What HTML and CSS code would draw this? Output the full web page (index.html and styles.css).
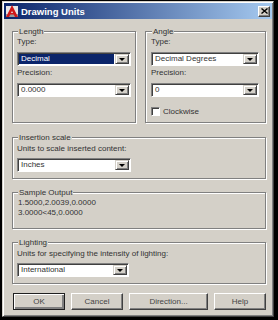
FILE: index.html
```html
<!DOCTYPE html>
<html lang="en">
<head>
    <meta charset="UTF-8">
    <meta name="viewport" content="width=device-width, initial-scale=1.0">
    <title>Drawing Units</title>
    <link rel="stylesheet" href="styles.css">
</head>
<body>
    <div class="window">
        <div class="titlebar">
            <svg class="app-icon" width="14" height="14" viewBox="0 0 14 14">
                <rect x="1" y="2" width="12" height="11" fill="#e6e6e6"/>
                <rect x="1" y="10" width="12" height="3" fill="#9a9a9a"/>
                <polygon points="7,1 13,13 10,13 7,7 4,13 1,13" fill="#d01818"/>
                <rect x="4" y="9" width="6" height="1.5" fill="#d01818"/>
            </svg>
            <span class="title">Drawing Units</span>
            <span class="close-btn">
                <svg width="7" height="6" viewBox="0 0 7 6">
                    <path d="M0.5 0.5 L6.5 5.5 M6.5 0.5 L0.5 5.5" stroke="#000" stroke-width="1.4"/>
                </svg>
            </span>
        </div>

        <div class="content">
            <div class="row-top">
                <fieldset class="group">
                    <legend>Length</legend>
                    <div class="label">Type:</div>
                    <div class="combo">
                        <span class="combo-value selected">Decimal</span>
                        <span class="combo-btn"></span>
                    </div>
                    <div class="label label-next">Precision:</div>
                    <div class="combo">
                        <span class="combo-value">0.0000</span>
                        <span class="combo-btn"></span>
                    </div>
                </fieldset>

                <fieldset class="group group-angle">
                    <legend>Angle</legend>
                    <div class="label">Type:</div>
                    <div class="combo">
                        <span class="combo-value">Decimal Degrees</span>
                        <span class="combo-btn"></span>
                    </div>
                    <div class="label label-next">Precision:</div>
                    <div class="combo">
                        <span class="combo-value">0</span>
                        <span class="combo-btn"></span>
                    </div>
                    <div class="check-row">
                        <span class="check"></span>
                        <span>Clockwise</span>
                    </div>
                </fieldset>
            </div>

            <fieldset class="group group-wide">
                <legend>Insertion scale</legend>
                <div class="label">Units to scale inserted content:</div>
                <div class="combo combo-short">
                    <span class="combo-value">Inches</span>
                    <span class="combo-btn"></span>
                </div>
            </fieldset>

            <fieldset class="group group-sample">
                <legend>Sample Output</legend>
                <div class="sample-line">1.5000,2.0039,0.0000</div>
                <div class="sample-line">3.0000&lt;45,0.0000</div>
            </fieldset>

            <fieldset class="group group-wide">
                <legend>Lighting</legend>
                <div class="label">Units for specifying the intensity of lighting:</div>
                <div class="combo combo-light">
                    <span class="combo-value">International</span>
                    <span class="combo-btn"></span>
                </div>
            </fieldset>

            <div class="buttons">
                <button class="btn btn-default">OK</button>
                <button class="btn">Cancel</button>
                <button class="btn btn-wide">Direction...</button>
                <button class="btn">Help</button>
            </div>
        </div>
    </div>
</body>
</html>
```

FILE: styles.css
```css
body {
    margin: 0;
    background-color: #000;
    font-family: "Liberation Sans", Arial, sans-serif;
    font-size: 8px;
    color: #333;
}

/* Dialog frame */
.window {
    margin: 1px 0 0 2px;
    width: 272px;
    height: 316px;
    box-sizing: border-box;
    padding: 1px;
    background-color: #d4d0c8;
    border: 1px solid;
    border-color: #d4d0c8 #404040 #404040 #d4d0c8;
    box-shadow: inset 1px 1px #fff, inset -1px -1px #808080;
}

.titlebar {
    height: 16px;
    display: flex;
    align-items: center;
    background: linear-gradient(90deg, #0a246a, #a6caf0);
}

.app-icon {
    margin-left: 1px;
    flex: none;
}

.title {
    flex: 1;
    margin-left: 2px;
    color: #fff;
    font-weight: bold;
    font-size: 9.5px;
}

.close-btn {
    width: 12px;
    height: 11px;
    margin-right: 2px;
    box-sizing: border-box;
    display: flex;
    align-items: center;
    justify-content: center;
    background-color: #d4d0c8;
    border: 1px solid;
    border-color: #fff #404040 #404040 #fff;
    box-shadow: inset -1px -1px #808080;
}

/* Content */
.content {
    padding: 8px 6px 0 8px;
}

.row-top {
    display: grid;
    grid-template-columns: 124px 121px;
    column-gap: 9px;
}

.group {
    margin: 0;
    min-width: 0;
    padding: 1px 4px 6px 4px;
    border: 1px solid #808080;
    box-shadow: inset 1px 1px #fff, 1px 1px #fff;
}

.group legend {
    margin-left: 1px;
    padding: 0 1px;
    line-height: 9px;
    background-color: #d4d0c8;
}

.group-angle {
    padding-left: 5px;
    padding-right: 6px;
}

.group-wide {
    margin-top: 10px;
    padding-top: 2px;
}

.group-wide + .group-sample {
    margin-top: 9px;
}

.group-sample {
    padding-bottom: 10px;
}

.group-sample + .group-wide {
    margin-top: 9px;
}

.label {
    line-height: 10px;
    margin-bottom: 4px;
    white-space: nowrap;
}

.row-top .label {
    margin-bottom: 5px;
}

.row-top .label-next {
    margin-top: 2px;
}

.sample-line {
    line-height: 10px;
    padding-left: 1px;
}

/* Combo boxes */
.combo {
    height: 14px;
    box-sizing: border-box;
    display: flex;
    padding: 1px;
    background-color: #fff;
    border: 1px solid;
    border-color: #808080 #fff #fff #808080;
    box-shadow: inset 1px 1px #404040;
}

.combo-short {
    width: 114px;
}

.combo-light {
    width: 112px;
}

.combo-value {
    flex: 1;
    min-width: 0;
    padding-left: 2px;
    line-height: 10px;
    white-space: nowrap;
    overflow: hidden;
}

.combo-value.selected {
    margin: 0 1px 0 0;
    background-color: #0a246a;
    color: #fff;
}

.combo-btn {
    width: 14px;
    flex: none;
    box-sizing: border-box;
    display: flex;
    align-items: center;
    justify-content: center;
    background-color: #d4d0c8;
    border: 1px solid;
    border-color: #d4d0c8 #404040 #404040 #d4d0c8;
    box-shadow: inset 1px 1px #fff, inset -1px -1px #808080;
}

.combo-btn::after {
    content: "";
    border-left: 3px solid transparent;
    border-right: 3px solid transparent;
    border-top: 3px solid #000;
}

/* Checkbox */
.check-row {
    margin-top: 10px;
    display: flex;
    align-items: center;
    gap: 3px;
    line-height: 9px;
}

.check {
    width: 9px;
    height: 9px;
    box-sizing: border-box;
    background-color: #fff;
    border: 1px solid;
    border-color: #808080 #fff #fff #808080;
    box-shadow: inset 1px 1px #404040;
}

/* Buttons */
.buttons {
    display: flex;
    gap: 6px;
    margin: 9px 0 0 1px;
}

.btn {
    width: 52px;
    height: 17px;
    padding: 0;
    font-family: "Liberation Sans", Arial, sans-serif;
    font-size: 8px;
    color: #444;
    background-color: #d4d0c8;
    border: 1px solid;
    border-color: #fff #404040 #404040 #fff;
    box-shadow: inset -1px -1px #808080;
}

.btn-default {
    border-color: #202020;
    box-shadow: inset 1px 1px #fff, inset -2px -2px #808080;
}

.btn-wide {
    width: 79px;
}
```
